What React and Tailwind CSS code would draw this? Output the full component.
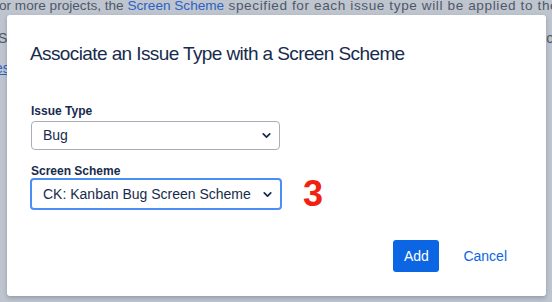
import { ChevronDown } from 'lucide-react';

const font = { fontFamily: '"Liberation Sans", Arial, sans-serif' };

function Select({ value, focused }) {
  return (
    <div
      className={
        focused
          ? 'flex items-center justify-between h-[32px] w-[252px] rounded-[4px] border-2 border-[#4c8ef7] bg-white pl-[11px] pr-[6px]'
          : 'flex items-center justify-between h-[29px] w-[249px] rounded-[4px] border border-[#a8aeb7] bg-white pl-[11px] pr-[6px] mx-[1px]'
      }
    >
      <span className="text-[14px] text-[#172b4d]">{value}</span>
      <ChevronDown className="w-[13px] h-[13px] text-[#172b4d]" strokeWidth={3.2} />
    </div>
  );
}

export default function App() {
  return (
    <div className="relative w-[552px] h-[302px] overflow-hidden bg-[#bfc5ce]" style={font}>
      {/* page behind overlay */}
      <div className="text-[13.6px] text-[#4f5868] leading-[20px] -ml-[1px] whitespace-nowrap -mt-[4px]">
        or more projects, the <span className="text-[#2c62c4]">Screen Scheme</span>
        <span className="tracking-[0.6px]"> specified for each issue type will be applied to the</span>
      </div>
      <div className="flex justify-between text-[14px] text-[#4f5868] leading-[20px] mt-[12px] -ml-[2px] whitespace-nowrap">
        <span>S</span>
        <span className="-mr-[2px]">o</span>
      </div>
      <div className="text-[14px] text-[#2c62c4] underline leading-[20px] mt-[10px] -ml-[5px]">es</div>

      {/* dialog */}
      <div className="absolute left-[7px] top-[15px] w-[539px] h-[281px] bg-white rounded-[3px] shadow-[0_2px_4px_rgba(9,30,66,0.25)] px-[23px] pt-[26px]">
        <h1 className="text-[19px] text-[#172b4d] leading-[26px] tracking-[-0.6px]">
          Associate an Issue Type with a Screen Scheme
        </h1>
        <div className="mt-[36px] flex flex-col">
          <label className="text-[12px] font-bold text-[#172b4d] leading-[16px] ml-[1px]">Issue Type</label>
          <div className="mt-[2px]">
            <Select value="Bug" />
          </div>
          <label className="mt-[13px] text-[12px] font-bold text-[#172b4d] leading-[16px] ml-[1px]">Screen Scheme</label>
          <div className="-mt-[1px] flex items-center h-[32px]">
            <Select value="CK: Kanban Bug Screen Scheme" focused />
            <span className="ml-[21px] text-[36px] font-bold text-[#f2200e] leading-[32px]">3</span>
          </div>
        </div>
        <div className="mt-[30px] flex justify-end items-center gap-[24px] pr-[16px]">
          <button className="h-[32px] w-[46px] rounded-[3px] bg-[#0c66e4] text-white text-[14px] font-medium">Add</button>
          <button className="text-[14px] text-[#0c66e4]">Cancel</button>
        </div>
      </div>
    </div>
  );
}
